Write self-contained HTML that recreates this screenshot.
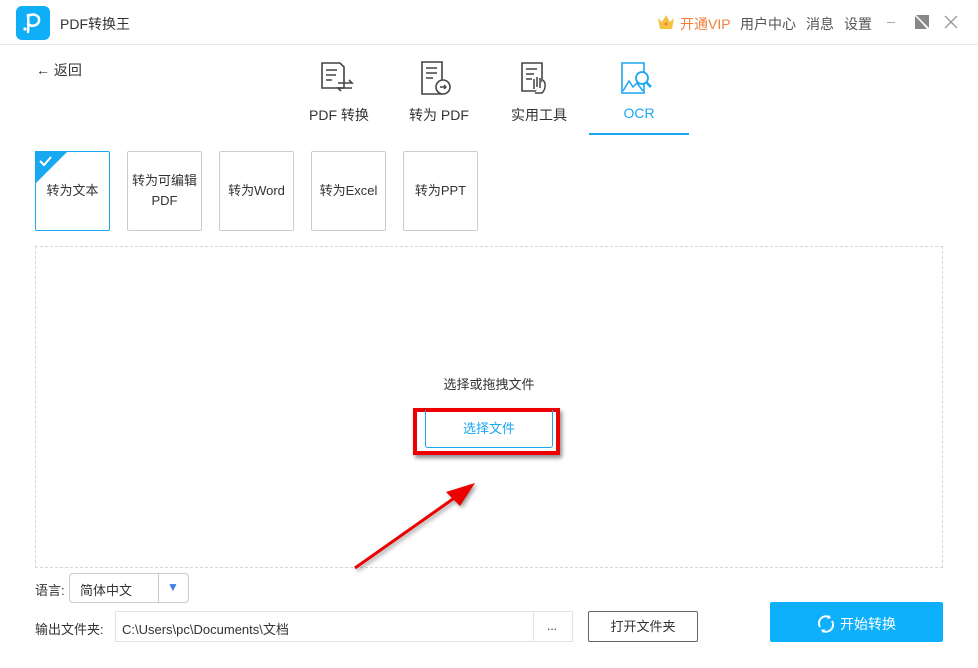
<!DOCTYPE html>
<html><head><meta charset="utf-8"><style>
*{margin:0;padding:0;box-sizing:border-box}
body{width:978px;height:668px;background:#fff;position:relative;overflow:hidden;font-family:"Liberation Sans","Noto Sans CJK SC",sans-serif;color:#333;font-size:13px}
.a{position:absolute}
.card{position:absolute;top:151px;width:75px;height:80px;border:1px solid #ccc;border-radius:2px;display:flex;align-items:center;justify-content:center;text-align:center;font-size:13px;line-height:20px;color:#333}
.tab{position:absolute;top:105px;font-size:14px;color:#333;width:100px;text-align:center}
</style></head><body>
<!-- title bar -->
<div class="a" style="left:16px;top:6px;width:34px;height:34px;background:#10aef7;border-radius:6px"></div>
<svg class="a" style="left:16px;top:6px" width="34" height="34" viewBox="0 0 34 34"><path d="M12 26 C13 18 12 12 12 9 M12 10 C17 7 24 9 23 15 C22 20 15 21 12 18" stroke="#fff" stroke-width="2.5" fill="none" stroke-linecap="round"/><circle cx="9" cy="23" r="1.6" fill="#fff"/></svg>
<div class="a" style="left:60px;top:14px;font-size:14px;color:#333">PDF转换王</div>
<div class="a" style="left:0;top:44px;width:978px;height:1px;background:#e6e6e6"></div>
<svg class="a" style="left:657px;top:14px" width="18" height="16" viewBox="0 0 18 16"><path d="M1 4 L5 8 L9 1 L13 8 L17 4 L15 15 L3 15Z" fill="#f5c242"/><circle cx="9" cy="10" r="1.5" fill="#f07f3c"/></svg>
<div class="a" style="left:680px;top:14px;font-size:14px;color:#f07f3c">开通VIP</div>
<div class="a" style="left:740px;top:14px;font-size:14px;color:#555">用户中心</div>
<div class="a" style="left:806px;top:14px;font-size:14px;color:#555">消息</div>
<div class="a" style="left:844px;top:14px;font-size:14px;color:#555">设置</div>
<div class="a" style="left:887px;top:22px;width:8px;height:1px;background:#aaa"></div>
<svg class="a" style="left:914px;top:14px" width="16" height="16"><path d="M1 1 L15 15 L15 1Z M1 1 L1 15 L13 15Z" fill="#888"/><path d="M1 1 L15 15" stroke="#fff" stroke-width="1.5"/></svg>
<svg class="a" style="left:944px;top:15px" width="14" height="14"><path d="M1 1 L13 13 M13 1 L1 13" stroke="#999" stroke-width="1.3"/></svg>
<!-- back -->
<div class="a" style="left:36px;top:60px;font-size:14px;color:#333">&#8592; 返回</div>
<!-- tabs -->
<svg class="a" style="left:320px;top:61px" width="40" height="36" viewBox="0 0 40 36"><path d="M2 2 H20 L24 6 V27 H2Z" fill="none" stroke="#444" stroke-width="1.6"/><path d="M6 9H17M6 14H16M6 19H12" stroke="#444" stroke-width="1.6"/><path d="M18 22H32L29 19M32 27H18L21 30" stroke="#444" stroke-width="1.6" fill="none"/></svg>
<svg class="a" style="left:420px;top:60px" width="40" height="38" viewBox="0 0 40 38"><path d="M2 2 H22 V34 H2Z" fill="none" stroke="#444" stroke-width="1.6"/><path d="M6 8H17M6 13H17M6 18H13" stroke="#444" stroke-width="1.6"/><circle cx="23" cy="27" r="7" fill="#fff" stroke="#444" stroke-width="1.6"/><path d="M20 27H26M24 25L26 27L24 29" stroke="#444" stroke-width="1.4" fill="none"/></svg>
<svg class="a" style="left:520px;top:61px" width="40" height="36" viewBox="0 0 40 36"><path d="M2 2 H22 V30 H2Z" fill="none" stroke="#444" stroke-width="1.6"/><path d="M6 8H17M6 13H14M6 18H12" stroke="#444" stroke-width="1.6"/><path d="M14 18 V28 M17 16V26 M20 17V27 M23 19 C26 22 26 28 22 32 H15" stroke="#444" stroke-width="1.5" fill="#fff"/></svg>
<svg class="a" style="left:620px;top:61px" width="40" height="36" viewBox="0 0 40 36"><path d="M2 2 H24 V32 H2Z" fill="none" stroke="#18a8f0" stroke-width="1.6"/><path d="M3 30 L9 20 L13 26 L17 22 L23 30" stroke="#18a8f0" stroke-width="1.5" fill="none"/><circle cx="22" cy="17" r="6" fill="#fff" stroke="#18a8f0" stroke-width="1.8"/><path d="M26 21 L31 26" stroke="#18a8f0" stroke-width="2.5"/></svg>
<div class="tab" style="left:289px">PDF 转换</div>
<div class="tab" style="left:389px">转为 PDF</div>
<div class="tab" style="left:489px">实用工具</div>
<div class="tab" style="left:589px;color:#18a8f0">OCR</div>
<div class="a" style="left:589px;top:133px;width:100px;height:2px;background:#18a8f0"></div>
<!-- cards -->
<div class="card" style="left:35px;border-color:#18a8f0">转为文本</div>
<svg class="a" style="left:35px;top:151px" width="34" height="34"><path d="M0 0 H33 L0 33Z" fill="#18a8f0"/><path d="M5 10 L9 14 L16 6" stroke="#fff" stroke-width="2" fill="none"/></svg>
<div class="card" style="left:127px">转为可编辑<br>PDF</div>
<div class="card" style="left:219px">转为Word</div>
<div class="card" style="left:311px">转为Excel</div>
<div class="card" style="left:403px">转为PPT</div>
<!-- drop zone -->
<div class="a" style="left:35px;top:246px;width:908px;height:322px;border:1px dashed #d6d6d6"></div>
<div class="a" style="left:0;top:374px;width:978px;text-align:center;font-size:13px;color:#333">选择或拖拽文件</div>
<div class="a" style="left:413px;top:408px;width:147px;height:47px;border:4px solid #e00;box-shadow:2px 3px 4px rgba(0,0,0,.45)"></div>
<div class="a" style="left:425px;top:410px;width:128px;height:38px;border:1px solid #18a8f0;border-top:none;border-radius:0 0 3px 3px;text-align:center;line-height:38px;color:#18a8f0;font-size:13px">选择文件</div>
<svg class="a" style="left:340px;top:470px" width="150" height="110"><g style="filter:drop-shadow(2px 2px 2px rgba(0,0,0,.4))"><path d="M15 98 L120 24" stroke="#e00" stroke-width="3"/><path d="M135 13 L106 22 L120 36Z" fill="#e00"/></g></svg>
<!-- bottom -->
<div class="a" style="left:35px;top:580px;font-size:13px">语言:</div>
<div class="a" style="left:69px;top:573px;width:120px;height:30px;border:1px solid #ccc;border-radius:4px"></div>
<div class="a" style="left:80px;top:580px;font-size:13px">简体中文</div>
<div class="a" style="left:158px;top:574px;width:1px;height:28px;background:#ccc"></div>
<div class="a" style="left:167px;top:580px;color:#3d7de6;font-size:12px">&#9660;</div>
<div class="a" style="left:35px;top:619px;font-size:13px">输出文件夹:</div>
<div class="a" style="left:115px;top:611px;width:458px;height:31px;border:1px solid #e2e2e2"></div>
<div class="a" style="left:284px;top:612px;width:1px;height:29px;display:none"></div>
<div class="a" style="left:533px;top:612px;width:1px;height:29px;background:#e2e2e2"></div>
<div class="a" style="left:122px;top:619px;font-size:13px">C:\Users\pc\Documents\文档</div>
<div class="a" style="left:547px;top:619px;font-size:12px">...</div>
<div class="a" style="left:588px;top:611px;width:110px;height:31px;border:1px solid #666;border-radius:2px;text-align:center;line-height:29px;font-size:13px">打开文件夹</div>
<div class="a" style="left:770px;top:602px;width:173px;height:40px;background:#0fb0fb;border-radius:2px"></div>
<svg class="a" style="left:816px;top:614px" width="20" height="20" viewBox="0 0 20 20"><path d="M4 13 A7 7 0 0 1 13 3 M16 7 A7 7 0 0 1 7 17" stroke="#fff" stroke-width="2" fill="none"/><path d="M13 1 L15 4 L11 5Z M7 19 L5 16 L9 15Z" fill="#fff"/></svg>
<div class="a" style="left:840px;top:614px;font-size:14px;color:#fff">开始转换</div>
</body></html>
